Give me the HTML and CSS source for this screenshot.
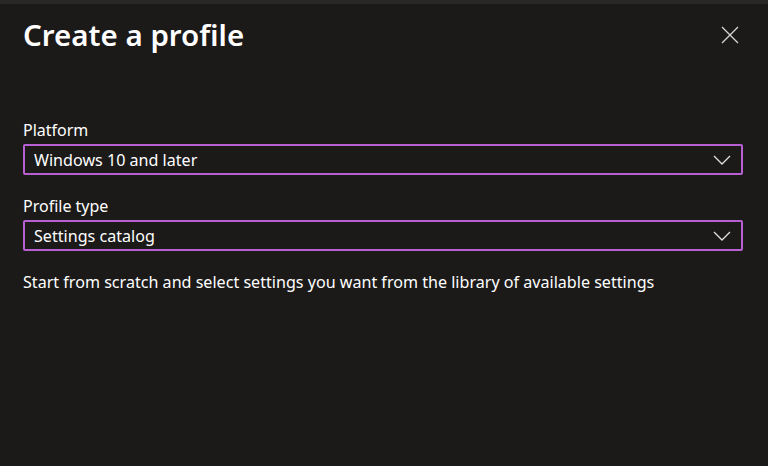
FILE: index.html
```html
<!DOCTYPE html>
<html>
<head>
<meta charset="utf-8">
<link rel="stylesheet" href="styles.css">
</head>
<body>
<div class="topbar"></div>
<div class="panel">
  <div class="header">
    <h1 class="title">Create a profile</h1>
    <button class="close" aria-label="Close">
      <svg width="18" height="18" viewBox="0 0 18 18"><path d="M1 1L17 17M17 1L1 17" stroke="#d6d6d6" stroke-width="1.3" fill="none"/></svg>
    </button>
  </div>
  <div class="field first">
    <div class="label">Platform</div>
    <div class="select">
      <span>Windows 10 and later</span>
      <svg class="chev" width="18" height="10" viewBox="0 0 18 10"><path d="M1 1L9 9L17 1" stroke="#e0e0e0" stroke-width="1.3" fill="none"/></svg>
    </div>
  </div>
  <div class="field">
    <div class="label">Profile type</div>
    <div class="select">
      <span>Settings catalog</span>
      <svg class="chev" width="18" height="10" viewBox="0 0 18 10"><path d="M1 1L9 9L17 1" stroke="#e0e0e0" stroke-width="1.3" fill="none"/></svg>
    </div>
  </div>
  <p class="desc">Start from scratch and select settings you want from the library of available settings</p>
</div>
</body>
</html>
```
FILE: styles.css
```css
html, body {
  margin: 0;
  padding: 0;
  background: #1b1a19;
  height: 100%;
}
body {
  font-family: "Noto Sans", "Open Sans", sans-serif;
  color: #ffffff;
  overflow: hidden;
}
.topbar {
  height: 4px;
  background: #292827;
}
.panel {
  padding: 0 25px 0 23px;
}
.header {
  display: flex;
  justify-content: space-between;
  align-items: center;
  height: 60px;
}
.title {
  margin: 0;
  font-size: 29.5px;
  font-weight: 600;
  letter-spacing: 0;
}
.close {
  background: none;
  border: 0;
  padding: 0;
  margin-right: 4px;
  margin-top: 2px;
  display: flex;
}
.field.first {
  margin-top: 55px;
}
.field {
  margin-bottom: 20px;
}
.label {
  font-size: 16px;
  line-height: 22px;
  margin-bottom: 3px;
}
.select {
  display: flex;
  align-items: center;
  justify-content: space-between;
  height: 27px;
  border: 2px solid #b85fd2;
  border-radius: 2px;
  padding: 0 10px 0 9px;
  font-size: 16.1px;
}
.desc {
  margin: 0;
  font-size: 16.1px;
  line-height: 22px;
}
```
